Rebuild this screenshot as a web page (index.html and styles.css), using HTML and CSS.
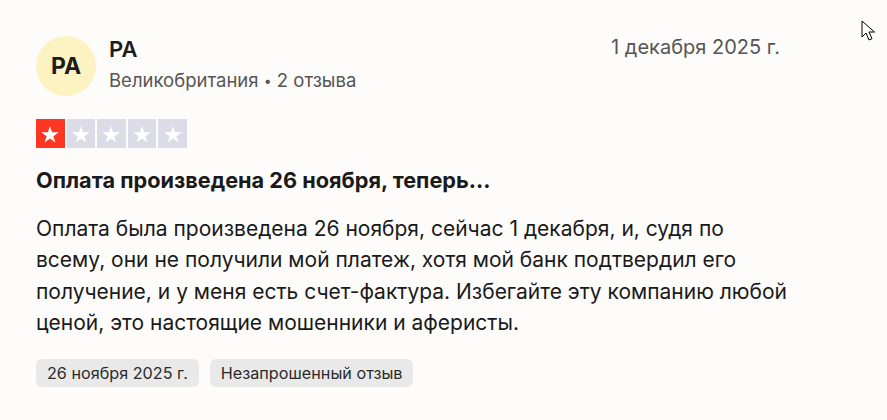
FILE: index.html
```html
<!DOCTYPE html>
<html lang="ru">
<head>
<meta charset="utf-8">
<link rel="stylesheet" href="styles.css">
</head>
<body>
<article class="review">
  <header class="head">
    <div class="avatar">PA</div>
    <div class="who">
      <div class="name">PA</div>
      <div class="meta">Великобритания <span class="dot">•</span> 2 отзыва</div>
    </div>
    <time class="date">1 декабря 2025 г.</time>
  </header>
  <div class="stars">
    <span class="tile on"><svg viewBox="0 0 24 24"><path d="M12 3.2l2.25 6.9h7.25l-5.86 4.26 2.24 6.9L12 17l-5.88 4.26 2.24-6.9L2.5 10.1h7.25z"/></svg></span>
    <span class="tile"><svg viewBox="0 0 24 24"><path d="M12 3.2l2.25 6.9h7.25l-5.86 4.26 2.24 6.9L12 17l-5.88 4.26 2.24-6.9L2.5 10.1h7.25z"/></svg></span>
    <span class="tile"><svg viewBox="0 0 24 24"><path d="M12 3.2l2.25 6.9h7.25l-5.86 4.26 2.24 6.9L12 17l-5.88 4.26 2.24-6.9L2.5 10.1h7.25z"/></svg></span>
    <span class="tile"><svg viewBox="0 0 24 24"><path d="M12 3.2l2.25 6.9h7.25l-5.86 4.26 2.24 6.9L12 17l-5.88 4.26 2.24-6.9L2.5 10.1h7.25z"/></svg></span>
    <span class="tile"><svg viewBox="0 0 24 24"><path d="M12 3.2l2.25 6.9h7.25l-5.86 4.26 2.24 6.9L12 17l-5.88 4.26 2.24-6.9L2.5 10.1h7.25z"/></svg></span>
  </div>
  <h2 class="title">Оплата произведена 26 ноября, теперь...</h2>
  <p class="text">Оплата была произведена 26 ноября, сейчас 1 декабря, и, судя по всему, они не получили мой платеж, хотя мой банк подтвердил его получение, и у меня есть счет-фактура. Избегайте эту компанию любой ценой, это настоящие мошенники и аферисты.</p>
  <div class="tags">
    <span class="tag">26 ноября 2025 г.</span>
    <span class="tag">Незапрошенный отзыв</span>
  </div>
</article>
<svg class="cursor" viewBox="0 0 14 22" width="14" height="22"><path d="M1 1v16l4-4 3 7 3-1.3-3-6.7h5.5z" fill="#fff" stroke="#000" stroke-width="1"/></svg>
</body>
</html>
```
FILE: styles.css
```css
html, body {
  margin: 0;
  padding: 0;
  background: #fdfcfa;
}
body {
  font-family: "Inter", "Liberation Sans", sans-serif;
  color: #1a1a1a;
  position: relative;
  width: 887px;
  height: 420px;
  overflow: hidden;
}
.review {
  width: 744px;
  padding: 36px 0 0 36px;
}
.head {
  display: flex;
  align-items: flex-start;
}
.avatar {
  width: 60px;
  height: 60px;
  border-radius: 50%;
  background: #fdf3c2;
  display: flex;
  align-items: center;
  justify-content: center;
  font-weight: 700;
  font-size: 23px;
  color: #1c1c1c;
  flex: none;
}
.who {
  margin-left: 13px;
  flex: 1;
}
.name {
  font-size: 22px;
  font-weight: 600;
  line-height: 26px;
  margin-top: 0;
  color: #1c1c1c;
}
.meta {
  font-size: 18.5px;
  color: #555;
  margin-top: 6px;
  line-height: 24px;
}
.dot {
  font-size: 14px;
  vertical-align: 1px;
}
.date {
  font-size: 20px;
  color: #555;
  line-height: 22px;
  margin-top: 0;
}
.stars {
  display: flex;
  gap: 2px;
  margin-top: 23px;
}
.tile {
  width: 28.6px;
  height: 29px;
  background: #dcdce6;
  display: flex;
  align-items: center;
  justify-content: center;
}
.tile.on {
  background: #ff3722;
}
.tile svg {
  width: 22px;
  height: 22px;
  fill: #fff;
}
.title {
  font-size: 21.7px;
  font-weight: 700;
  margin: 19px 0 0;
  line-height: 26px;
  color: #1a1a1a;
}
.text {
  font-size: 21px;
  line-height: 31.3px;
  margin: 20px 0 0;
  width: 755px;
  color: #1a1a1a;
}
.tags {
  display: flex;
  gap: 11px;
  margin-top: 21px;
}
.tag {
  background: #e9e9e9;
  border-radius: 6px;
  font-size: 16.2px;
  line-height: 28px;
  padding: 0 11px;
  color: #2b2b2b;
}
.cursor {
  position: absolute;
  left: 861px;
  top: 20px;
}
```
